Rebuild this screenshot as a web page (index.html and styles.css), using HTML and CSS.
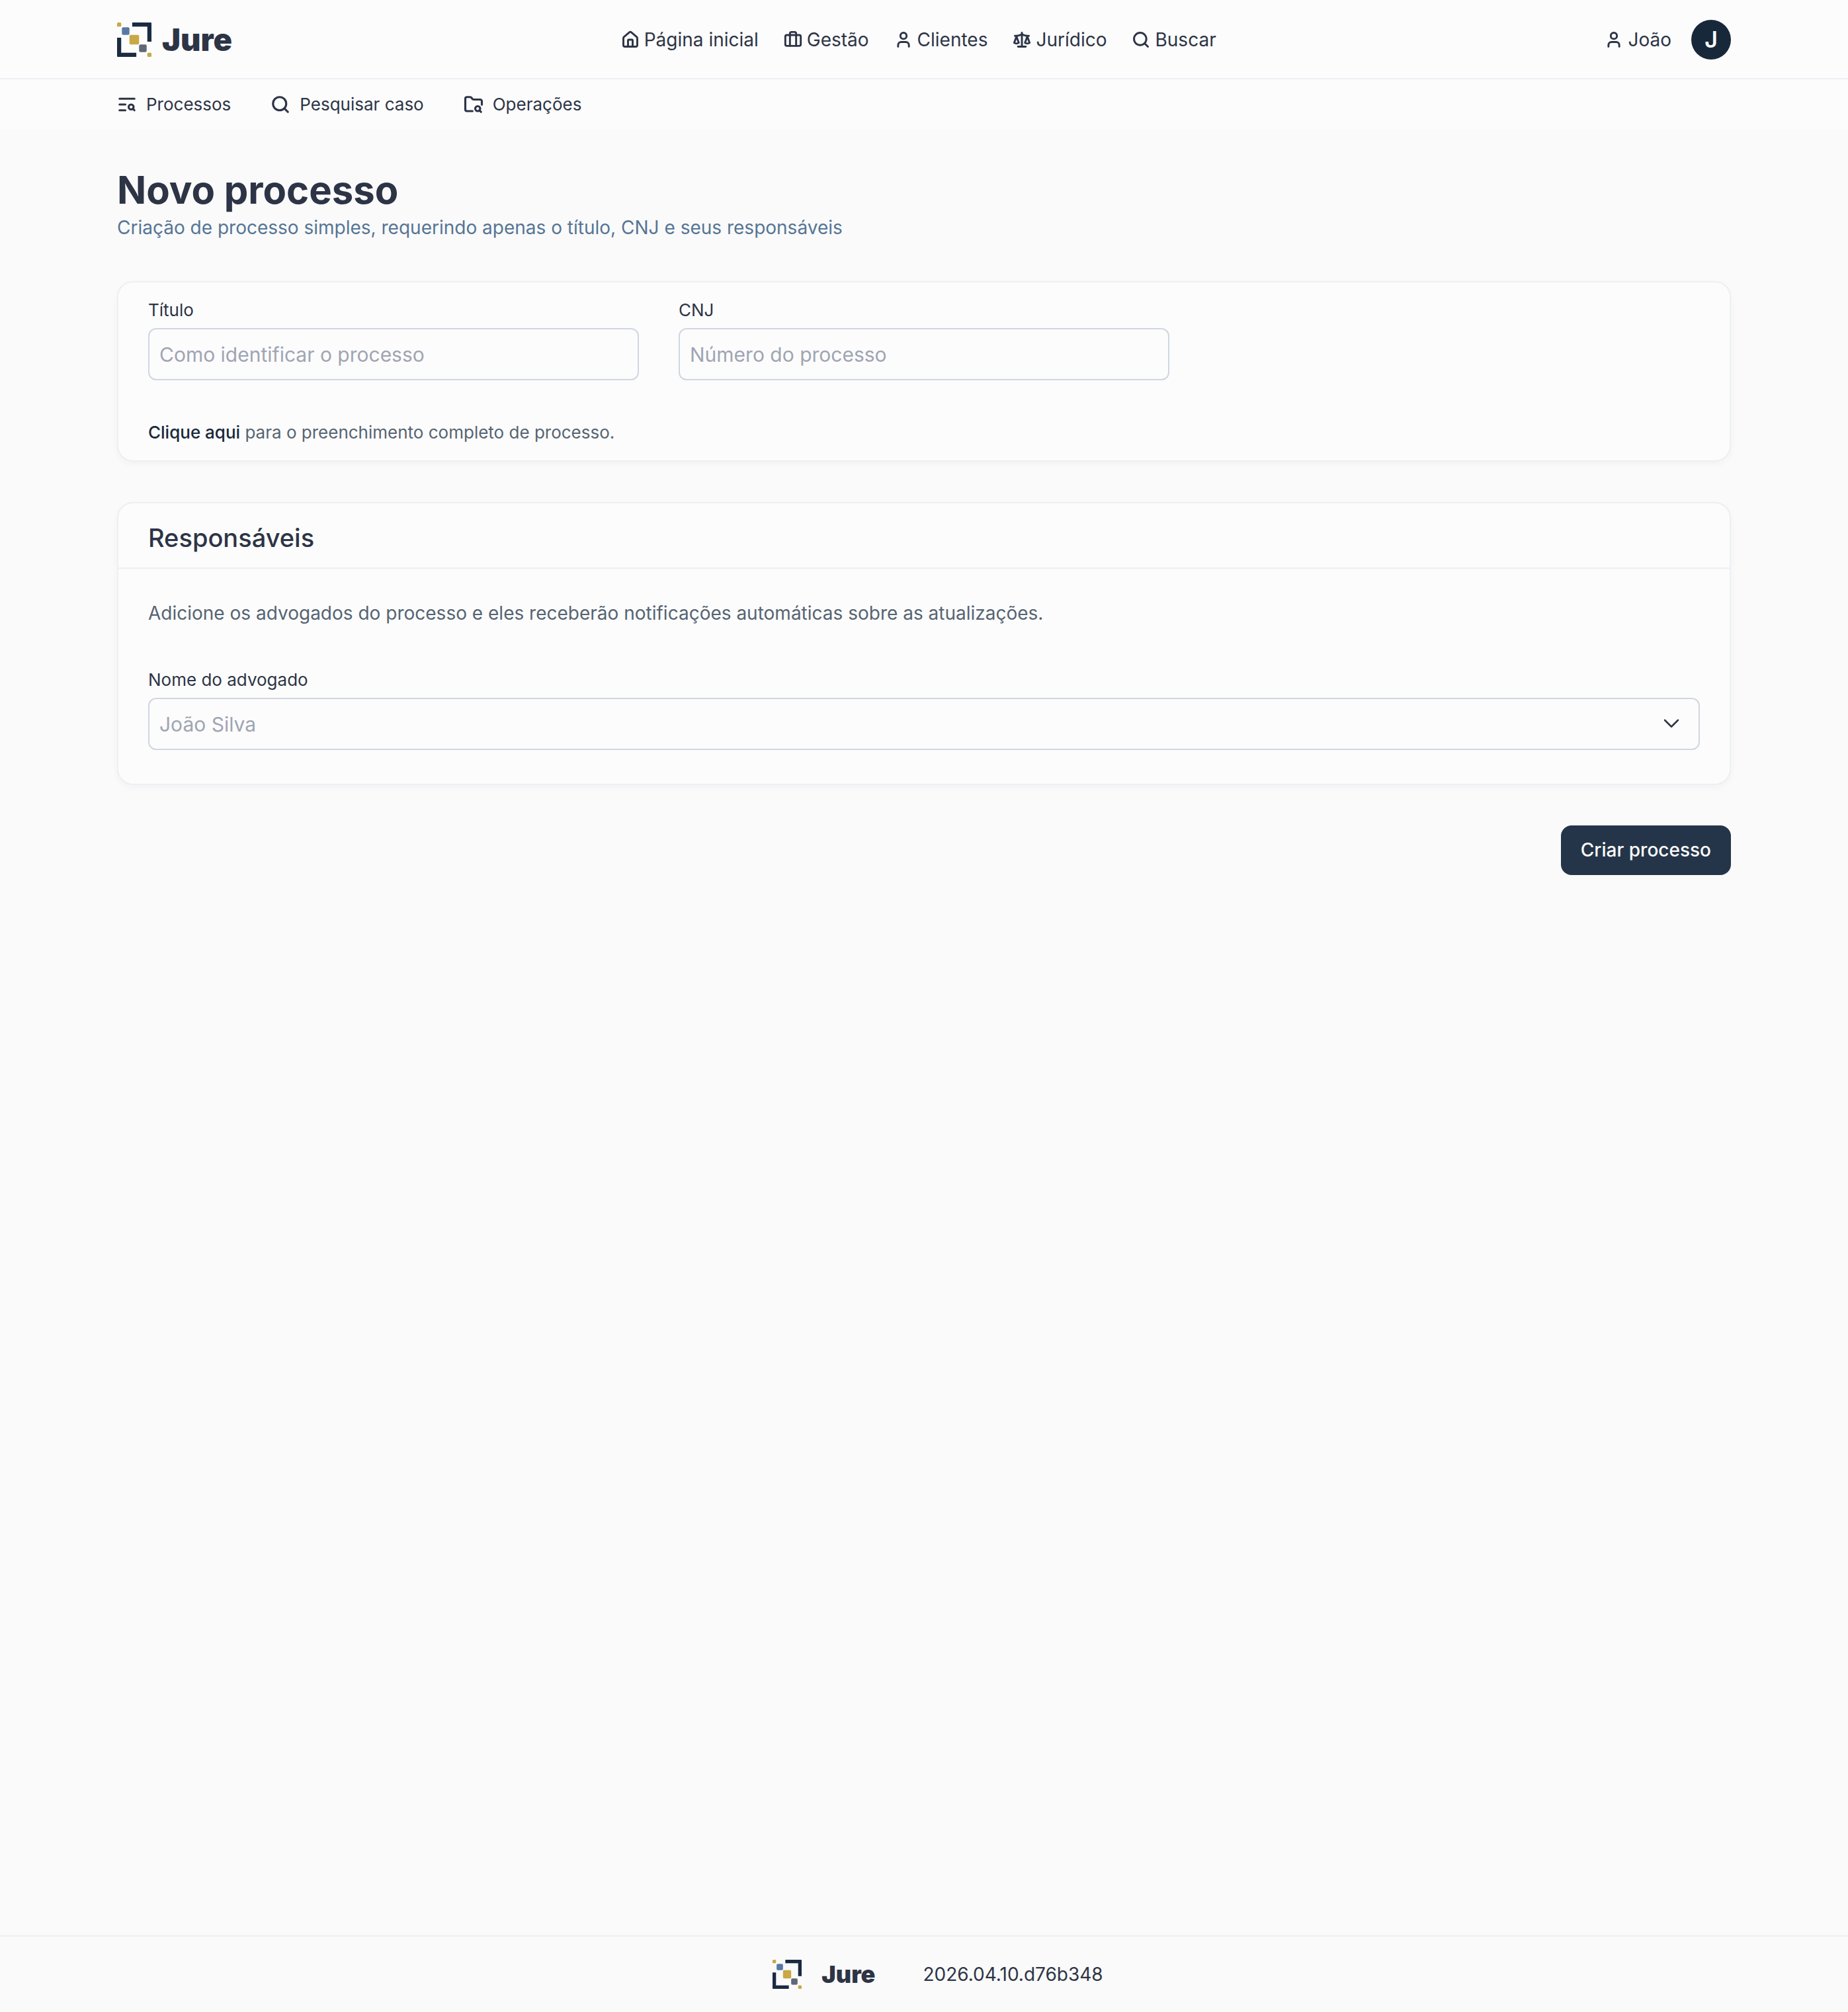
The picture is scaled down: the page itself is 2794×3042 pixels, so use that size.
FILE: index.html
```html
<!DOCTYPE html>
<html lang="pt-BR">
<head>
    <meta charset="UTF-8">
    <meta name="viewport" content="width=device-width, initial-scale=1.0">
    <title>Novo processo - Jure</title>
    <link rel="stylesheet" href="styles.css">
</head>
<body>

<!-- Shared logo and icons -->
<svg class="sprite" aria-hidden="true">
    <symbol id="logo" viewBox="0 0 50 50">
        <path fill="#1a2b42" d="M22 0h27a1 1 0 0 1 1 1v27h-6V6H22z" />
        <path fill="#1a2b42" d="M0 22h6v22h22v6H1a1 1 0 0 1-1-1z" />
        <rect fill="#c9a845" width="6" height="6" rx="1.5" />
        <rect fill="#5878a5" x="7" y="7" width="11" height="11" rx="2" />
        <rect fill="#c9a845" x="18" y="18" width="14" height="14" rx="2" />
        <rect fill="#606878" x="32" y="32" width="11" height="11" rx="2" />
        <rect fill="#c9a845" x="44" y="44" width="6" height="6" rx="1.5" />
    </symbol>
    <symbol id="icon-home" viewBox="0 0 24 24">
        <path d="M15 21v-8a1 1 0 0 0-1-1h-4a1 1 0 0 0-1 1v8" />
        <path d="M3 10a2 2 0 0 1 .709-1.528l7-5.999a2 2 0 0 1 2.582 0l7 5.999A2 2 0 0 1 21 10v9a2 2 0 0 1-2 2H5a2 2 0 0 1-2-2z" />
    </symbol>
    <symbol id="icon-briefcase" viewBox="0 0 24 24">
        <path d="M16 20V4a2 2 0 0 0-2-2h-4a2 2 0 0 0-2 2v16" />
        <rect width="20" height="14" x="2" y="6" rx="2" />
    </symbol>
    <symbol id="icon-user" viewBox="0 0 24 24">
        <path d="M19 21v-2a4 4 0 0 0-4-4H9a4 4 0 0 0-4 4v2" />
        <circle cx="12" cy="7" r="4" />
    </symbol>
    <symbol id="icon-scale" viewBox="0 0 24 24">
        <path d="m16 16 3-8 3 8c-.87.65-1.92 1-3 1s-2.13-.35-3-1Z" />
        <path d="m2 16 3-8 3 8c-.87.65-1.92 1-3 1s-2.13-.35-3-1Z" />
        <path d="M7 21h10M12 3v18M3 7h2c2 0 5-1 7-2 2 1 5 2 7 2h2" />
    </symbol>
    <symbol id="icon-search" viewBox="0 0 24 24">
        <circle cx="11" cy="11" r="8" />
        <path d="m21 21-4.300-4.300" />
    </symbol>
    <symbol id="icon-text-search" viewBox="0 0 24 24">
        <path d="M21 5H3M10 12H3M10 19H3" />
        <circle cx="17" cy="15" r="3" />
        <path d="m21 19-1.900-1.900" />
    </symbol>
    <symbol id="icon-folder-search" viewBox="0 0 24 24">
        <path d="M10.700 20H4a2 2 0 0 1-2-2V5a2 2 0 0 1 2-2h3.900a2 2 0 0 1 1.690.9l.810 1.200a2 2 0 0 0 1.670.9H20a2 2 0 0 1 2 2v4.100" />
        <circle cx="17" cy="17" r="3" />
        <path d="m21 21-1.900-1.900" />
    </symbol>
    <symbol id="icon-chevron" viewBox="0 0 24 24">
        <path d="m4 7 8 8 8-8" />
    </symbol>
</svg>

<header class="header">
    <div class="container header-row">
        <a class="brand" href="#">
            <svg class="brand-logo"><use href="#logo" /></svg>
            <span class="brand-name">Jure</span>
        </a>
        <nav class="main-nav" aria-label="Principal">
            <a href="#"><svg class="icon"><use href="#icon-home" /></svg>Página inicial</a>
            <a href="#"><svg class="icon"><use href="#icon-briefcase" /></svg>Gestão</a>
            <a href="#"><svg class="icon"><use href="#icon-user" /></svg>Clientes</a>
            <a href="#"><svg class="icon"><use href="#icon-scale" /></svg>Jurídico</a>
            <a href="#"><svg class="icon"><use href="#icon-search" /></svg>Buscar</a>
        </nav>
        <div class="account">
            <a href="#"><svg class="icon"><use href="#icon-user" /></svg>João</a>
            <span class="avatar">J</span>
        </div>
    </div>
</header>

<nav class="sub-nav" aria-label="Jurídico">
    <div class="container sub-nav-row">
        <a href="#"><svg class="icon"><use href="#icon-text-search" /></svg>Processos</a>
        <a href="#"><svg class="icon"><use href="#icon-search" /></svg>Pesquisar caso</a>
        <a href="#"><svg class="icon"><use href="#icon-folder-search" /></svg>Operações</a>
    </div>
</nav>

<main class="container">
    <h1>Novo processo</h1>
    <p class="subtitle">Criação de processo simples, requerindo apenas o título, CNJ e seus responsáveis</p>

    <form class="process-form">
        <section class="card card-basic">
            <div class="field-grid">
                <div class="field">
                    <label for="title">Título</label>
                    <input type="text" id="title" placeholder="Como identificar o processo">
                </div>
                <div class="field">
                    <label for="cnj">CNJ</label>
                    <input type="text" id="cnj" placeholder="Número do processo">
                </div>
            </div>
            <p class="hint"><a href="#">Clique aqui</a> para o preenchimento completo de processo.</p>
        </section>

        <section class="card">
            <h2>Responsáveis</h2>
            <div class="card-body">
                <p class="description">Adicione os advogados do processo e eles receberão notificações automáticas sobre as atualizações.</p>
                <div class="field">
                    <label for="lawyer">Nome do advogado</label>
                    <div class="select-wrap">
                        <select id="lawyer">
                            <option>João Silva</option>
                        </select>
                        <svg class="icon chevron"><use href="#icon-chevron" /></svg>
                    </div>
                </div>
            </div>
        </section>

        <button class="submit-btn" type="submit">Criar processo</button>
    </form>
</main>

<footer class="footer">
    <a class="footer-brand" href="#">
        <svg class="brand-logo"><use href="#logo" /></svg>
        <span class="brand-name">Jure</span>
    </a>
    <span>2026.04.10.d76b348</span>
</footer>

</body>
</html>
```
FILE: styles.css
```css
* {
    margin: 0;
    padding: 0;
    box-sizing: border-box;
}

body {
    font-family: Inter, "Liberation Sans", sans-serif;
    font-size: 28px;
    line-height: 42px;
    color: #2d3446;
    background-color: #fafafa;
    display: flex;
    flex-direction: column;
    min-height: 100vh;
}

a {
    color: inherit;
    text-decoration: none;
}

.sprite {
    position: absolute;
    width: 0;
    height: 0;
}

.container {
    width: 100%;
    max-width: 2500px;
    margin: 0 auto;
    padding: 0 30px;
}

.icon {
    width: 28px;
    height: 28px;
    flex-shrink: 0;
    fill: none;
    stroke: currentColor;
    stroke-width: 2.5;
    stroke-linecap: round;
    stroke-linejoin: round;
}

/* Header */
.header {
    background-color: #fcfcfc;
    border-bottom: 2px solid #eeeff4;
}

.header-row {
    display: flex;
    align-items: center;
    justify-content: space-between;
    height: 118px;
    padding-top: 2px;
}

.brand {
    display: flex;
    align-items: center;
    gap: 16px;
}

.brand-logo {
    width: 52px;
    height: 52px;
}

.brand-name {
    font-size: 47px;
    font-weight: 900;
}

.main-nav {
    display: flex;
    gap: 38px;
}

.main-nav a,
.account a {
    display: flex;
    align-items: center;
    gap: 7px;
}

.account {
    display: flex;
    align-items: center;
    gap: 30px;
}

.avatar {
    display: flex;
    align-items: center;
    justify-content: center;
    width: 60px;
    height: 60px;
    border-radius: 50%;
    background-color: #18283b;
    color: #fcfcfc;
    font-size: 34px;
    font-weight: 600;
}

.sub-nav {
    background-color: #fcfcfc;
    font-size: 26px;
}

.sub-nav-row {
    display: flex;
    gap: 60px;
    padding-top: 17px;
    padding-bottom: 16px;
}

.sub-nav a {
    display: flex;
    align-items: center;
    gap: 14px;
}

.sub-nav .icon {
    width: 30px;
    height: 30px;
}

/* Content */
main {
    flex: 1;
}

h1 {
    margin-top: 60px;
    font-size: 58px;
    font-weight: 700;
    line-height: 64px;
}

.subtitle {
    margin-top: 4px;
    color: #557595;
}

.process-form {
    display: flex;
    flex-direction: column;
    gap: 61px;
    margin-top: 60px;
}

.card {
    background-color: #fcfcfc;
    border: 2px solid #eeeff4;
    border-radius: 24px;
    box-shadow: 0 4px 8px rgba(45, 70, 110, 0.04);
}

.card-basic {
    padding: 23px 45px;
}

.card h2 {
    padding: 25px 45px 18px;
    border-bottom: 2px solid #eeeff4;
    font-size: 38px;
    font-weight: 500;
    line-height: 54px;
}

.card-body {
    padding: 45px 45px 51px;
}

.field-grid {
    display: grid;
    grid-template-columns: repeat(3, 1fr);
    gap: 60px;
}

.field {
    display: flex;
    flex-direction: column;
    gap: 8px;
}

.field label {
    font-size: 26px;
    line-height: 38px;
}

.field input,
.field select {
    width: 100%;
    height: 79px;
    padding: 0 15px;
    border: 2px solid #d0d6e2;
    border-radius: 12px;
    background-color: #fcfcfc;
    font-family: inherit;
    font-size: 30px;
    color: #9fa5b3;
    appearance: none;
}

.field input::placeholder {
    color: #9fa5b3;
    opacity: 1;
}

.select-wrap {
    display: flex;
    position: relative;
}

.chevron {
    position: absolute;
    top: 25px;
    right: 28px;
    width: 30px;
    height: 30px;
    stroke-width: 2;
    pointer-events: none;
}

.hint {
    margin-top: 60px;
    font-size: 26px;
    line-height: 38px;
    color: #566472;
}

.hint a {
    color: #18283b;
    font-weight: 500;
}

.description {
    margin-bottom: 60px;
    line-height: 44px;
    color: #566472;
}

.submit-btn {
    align-self: flex-end;
    padding: 16px 30px;
    border: none;
    border-radius: 16px;
    background-color: #253549;
    color: #fcfcfc;
    font-family: inherit;
    font-size: 28px;
    font-weight: 500;
    line-height: 43px;
    cursor: pointer;
}

/* Footer */
.footer {
    display: flex;
    align-items: center;
    justify-content: center;
    gap: 72px;
    height: 116px;
    border-top: 2px solid #eeeff4;
}

.footer-brand {
    display: flex;
    align-items: center;
    gap: 30px;
    padding-left: 42px;
}

.footer .brand-logo {
    width: 44px;
    height: 44px;
}

.footer .brand-name {
    font-size: 36px;
}
```
